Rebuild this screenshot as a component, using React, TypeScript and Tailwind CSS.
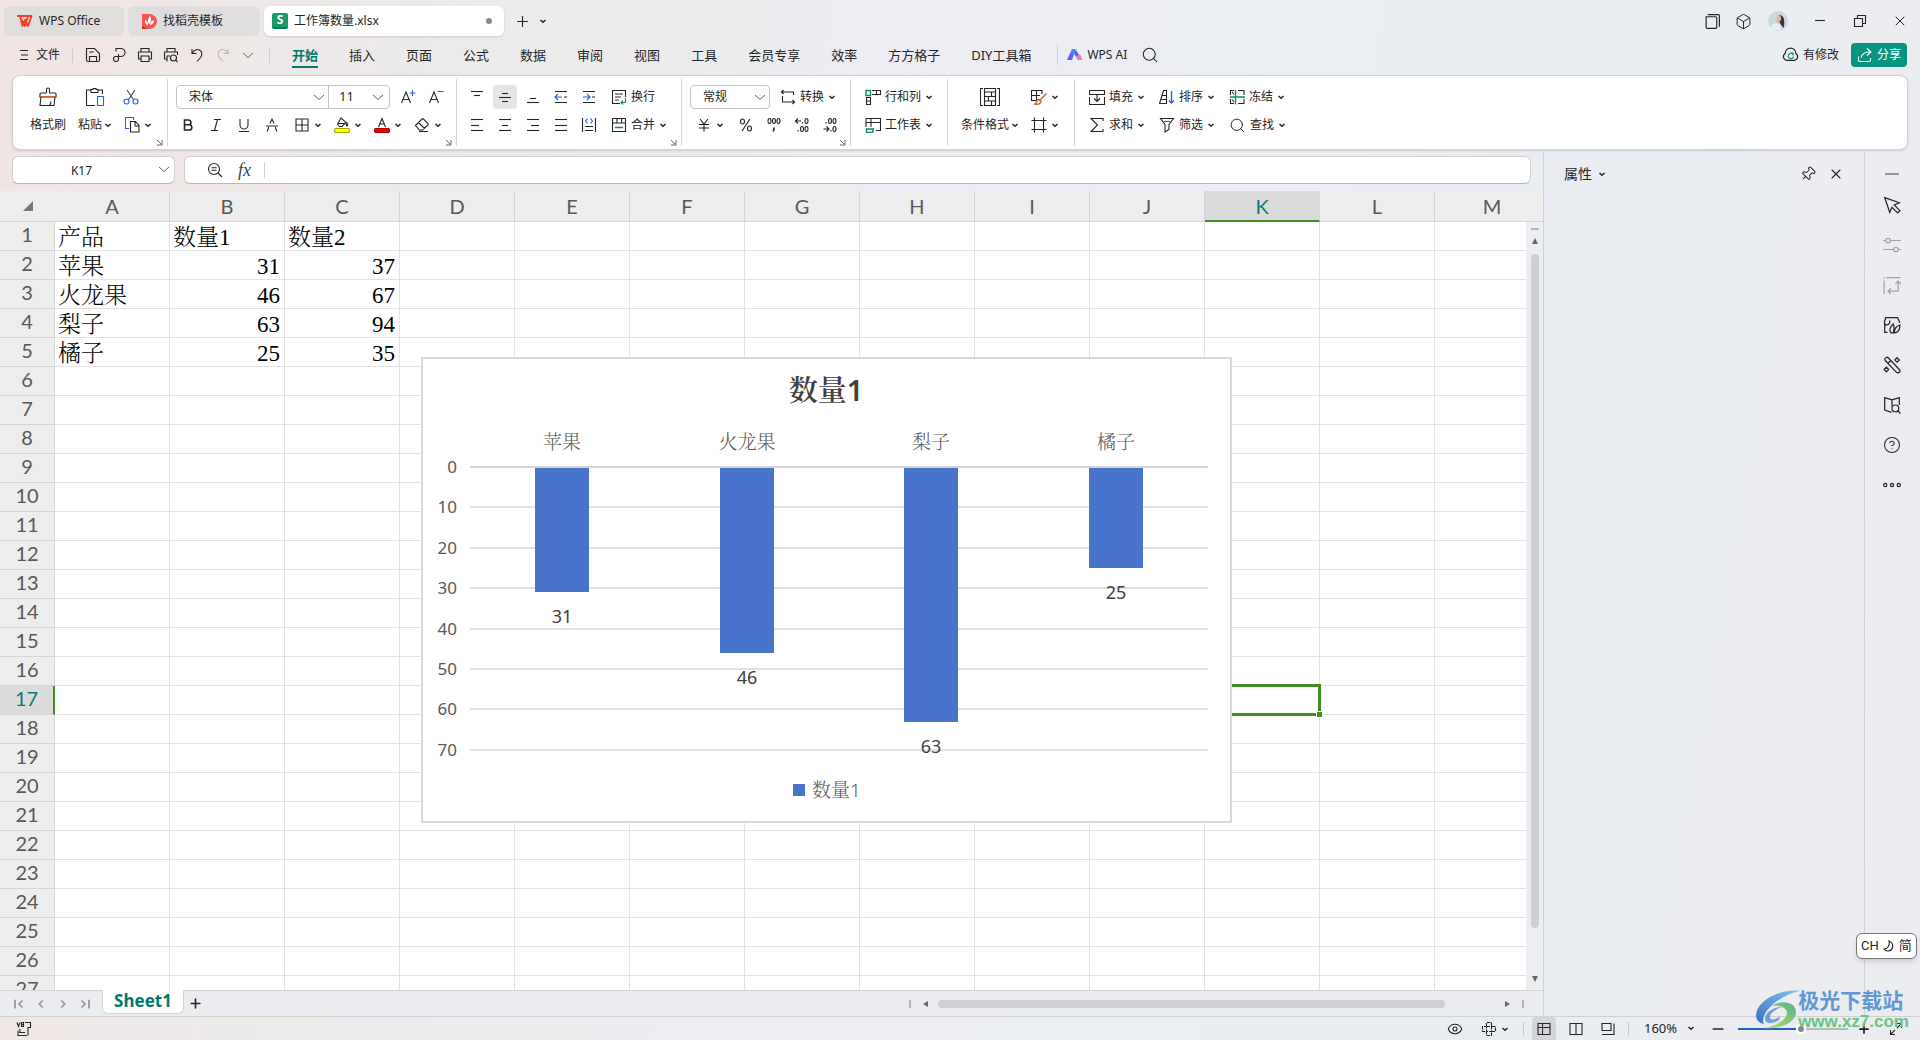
import type { ReactNode } from 'react';
import { Box, CircleHelp, Eye, Minus, Pin, Plus, Search, X } from 'lucide-react';

interface IconProps {
  size?: number;
  box?: number;
  className?: string;
  children: ReactNode;
}

function Icon({ size = 16, box = 16, className = '', children }: IconProps) {
  return (
    <svg
      width={size}
      height={size}
      viewBox={`0 0 ${box} ${box}`}
      fill="none"
      stroke="currentColor"
      strokeWidth={1.1}
      aria-hidden="true"
      className={`shrink-0 ${className}`}
    >
      {children}
    </svg>
  );
}

const BLUE = '#2b5fe0';
const GREEN = '#0f8a5f';
const ORANGE = '#d0672f';

function Chev() {
  return (
    <svg width="8" height="8" viewBox="0 0 8 8" fill="none" stroke="currentColor" strokeWidth="1.5" aria-hidden="true" className="shrink-0">
      <path d="M1.500 3L4 5.300 6.500 3" />
    </svg>
  );
}

function WideChev({ className = '' }: { className?: string }) {
  return (
    <svg width="10" height="10" viewBox="0 0 10 10" fill="none" stroke="currentColor" aria-hidden="true" className={`shrink-0 text-[#666] ${className}`}>
      <path d="M0 3l5 4.500 5-4.500" />
    </svg>
  );
}

interface ToolProps {
  label: string;
  icon: ReactNode;
  active?: boolean;
}

function Tool({ label, icon, active }: ToolProps) {
  return (
    <button aria-label={label} className="flex h-7 w-7 items-center justify-center">
      <span className={active ? 'flex size-6 items-center justify-center rounded bg-[#e5e5e5]' : 'flex size-6 items-center justify-center'}>
        {icon}
      </span>
    </button>
  );
}

function DropTool({ label, icon }: ToolProps) {
  return (
    <button aria-label={label} className="flex h-7 w-10 items-center gap-1 pl-1">
      {icon}
      <Chev />
    </button>
  );
}

function TextTool({ label, icon, drop = true }: ToolProps & { drop?: boolean }) {
  return (
    <button className="flex h-7 items-center gap-1 pl-1 whitespace-nowrap">
      {icon}
      <span>{label}</span>
      {drop && <Chev />}
    </button>
  );
}

function Group({ children, launcher, className = '' }: { children: ReactNode; launcher?: boolean; className?: string }) {
  return (
    <div className={`relative my-[3px] shrink-0 border-r border-[#d6d6d6] pt-1 ${className}`}>
      {children}
      {launcher && (
        <button aria-label="更多设置" className="absolute right-1 bottom-0 text-[#666]">
          <svg width="7" height="7" viewBox="0 0 7 7" fill="none" stroke="currentColor" aria-hidden="true">
            <path d="M1 1l4 4M6 1v5H1" />
          </svg>
        </button>
      )}
    </div>
  );
}

function Lines({ rows }: { rows: [number, number, number][] }) {
  return (
    <Icon>
      {rows.map(([x1, x2, y]) => (
        <path key={y} d={`M${x1} ${y}H${x2}`} />
      ))}
    </Icon>
  );
}

function TitleBar() {
  return (
    <header className="flex h-[38px] shrink-0 items-center pt-1 pl-1">
      <button className="flex h-[30px] w-[120px] items-center gap-1.5 rounded-md bg-[#e0dddd] pl-3">
        <svg width="17" height="14" viewBox="0 0 17 14" aria-hidden="true">
          <path d="M1 2h11l-3 10-3-6M4 2l2.500 10 3-7M9 7l3 5 3.500-10h-4" fill="none" stroke="#f5402c" strokeWidth="1.900" strokeLinejoin="round" />
        </svg>
        WPS Office
      </button>
      <button className="ml-1 flex h-[30px] w-[132px] items-center gap-1.5 rounded-md bg-[#dfdddd] pl-3.5">
        <svg width="15" height="17" viewBox="0 0 15 17" aria-hidden="true">
          <path d="M0 1h7a8 7.500 0 0 1 0 15H0z" fill="#f25555" />
          <path d="M0 13l5 3H0z" fill="#b82f2f" />
          <path d="M8 3c2 3 1 6-1 8-2-2-1-5 1-8zM3 7c2 1 3 2 3 5-2 0-3-2-3-5zM12 7c0 3-2 5-4 5 0-3 2-4 4-5z" fill="#fff" />
        </svg>
        找稻壳模板
      </button>
      <div className="ml-1 flex h-[30px] w-[240px] items-center gap-1.5 rounded-md bg-white pr-3 pl-2 shadow-sm">
        <span className="flex size-4 items-center justify-center rounded-xs border-b-2 border-[#0a7a4c] bg-[#159a68] text-xs leading-3 font-bold text-white">S</span>
        工作簿数量.xlsx
        <span className="ml-auto size-1.5 rounded-full bg-[#8a8a8a]" />
      </div>
      <button aria-label="新建" className="ml-2.5"><Plus size={17} strokeWidth={1.6} /></button>
      <button aria-label="标签列表" className="ml-2"><Chev /></button>
      <div className="ml-auto flex items-center">
        <button aria-label="窗口" className="mr-3.5">
          <Icon size={17}>
            <path d="M2 3.500h9a1 1 0 0 1 1 1v9a1 1 0 0 1-1 1H3a1 1 0 0 1-1-1zM3.500 1.500h10a1 1 0 0 1 1 1V13" />
          </Icon>
        </button>
        <button aria-label="应用" className="mr-4"><Box size={17} strokeWidth={1.4} /></button>
        <button aria-label="账号" className="mr-3">
          <svg width="20" height="20" viewBox="0 0 20 20" aria-hidden="true">
            <circle cx="10" cy="10" r="10" fill="#cbd9de" />
            <path d="M9 8c0-4 4-5 6-2 2 3 1 7 1 11l-3-3-2-4z" fill="#3d3238" />
            <path d="M9 6c1-2 3-2 4 0v3l-3 3-2-1z" fill="#dfb7aa" />
            <path d="M3 19c0-4 2-7 5-7l4 2 1 5z" fill="#e6eff1" />
          </svg>
        </button>
        <button aria-label="最小化" className="flex w-10 justify-center"><Icon size={12} box={12}><path d="M1 5.500h10" /></Icon></button>
        <button aria-label="还原" className="flex w-10 justify-center">
          <Icon size={14} box={14}><path d="M1.500 4.500h8v8h-8zM4.500 4.500v-3h8v8h-3" /></Icon>
        </button>
        <button aria-label="关闭" className="flex w-10 justify-center"><X size={16} strokeWidth={1.5} /></button>
      </div>
    </header>
  );
}

const menus = ['开始', '插入', '页面', '公式', '数据', '审阅', '视图', '工具', '会员专享', '效率', '方方格子', 'DIY工具箱'];

function MenuBar() {
  return (
    <nav className="flex h-[37px] shrink-0 items-center pr-[13px] pb-1 pl-[18px]">
      <button className="flex items-center gap-1.5">
        <Icon size={12} box={12}><path d="M2 1.500h8M3 6h7M2 10.500h8" /></Icon>
        文件
      </button>
      <span className="ml-3 h-4 w-px bg-[#cfcdcd]" />
      <div className="ml-3 flex items-center gap-2.5">
        <button aria-label="保存"><Icon><path d="M2 1.500h7.500l5 5V13a1.500 1.500 0 0 1-1.500 1.500H3A1.500 1.500 0 0 1 1.500 13V1.500zM4.500 14.500v-5h7v5M4.500 5h4" /></Icon></button>
        <button aria-label="输出"><Icon><path d="M5 4.500v-3h5a4 4 0 0 1 0 8H5a2.500 2.500 0 1 0 2.500 2.500V7" /></Icon></button>
        <button aria-label="打印"><Icon><path d="M4 5V1.500h8V5M4 12H1.500V5h13v7H12M4 9h8v5.500H4z" /></Icon></button>
        <button aria-label="打印预览"><Icon><path d="M4 5V1.500h8V5M4 12H1.500V5h13v3M4 14.500V9h3" /><circle cx="10.500" cy="11" r="3" /><path d="M12.700 13.200l2 2" /></Icon></button>
        <button aria-label="撤销"><Icon><path d="M3 2v4.500h4.500M3.500 6C5 3 8 1.700 10.500 3c3 1.500 3 5 1 7.500L8 14.500" /></Icon></button>
        <button aria-label="恢复" className="text-[#b9b5b5]"><Icon><path d="M13 2v4.500H8.500M12.500 6C11 3 8 1.700 5.500 3c-3 1.500-3 5-1 7.500L8 14.500" /></Icon></button>
        <button aria-label="更多" className="pl-0.5"><WideChev className="text-[#333]" /></button>
      </div>
      <span className="ml-4 h-4 w-px bg-[#cfcdcd]" />
      <div className="ml-[22px] flex gap-[31px] text-[13px] whitespace-nowrap">
        {menus.map((name, i) => (
          <button
            key={name}
            className={
              i === 0
                ? 'border-y-2 border-t-transparent border-b-[#007a6c] pt-1 pb-0.5 font-bold text-[#007a6c]'
                : 'border-y-2 border-transparent pt-1 pb-0.5'
            }
          >
            {name}
          </button>
        ))}
      </div>
      <span className="ml-[26px] h-5 w-px bg-[#cfcfd6]" />
      <button className="ml-2 flex items-center gap-1 whitespace-nowrap">
        <svg width="17" height="13" viewBox="0 0 17 13" aria-hidden="true">
          <defs>
            <linearGradient id="ai" x1="0" y1="1" x2="1" y2="0">
              <stop offset="0" stopColor="#7a3cf5" />
              <stop offset="1" stopColor="#2aa5ff" />
            </linearGradient>
          </defs>
          <path d="M1 12L6 1h4L6 12z" fill="url(#ai)" />
          <path d="M10 2l3 5-3 2-2-4z" fill="#4b62f7" />
          <path d="M10 9l4-3 2.500 6H12z" fill="#f777a8" />
        </svg>
        WPS AI
      </button>
      <button aria-label="搜索" className="ml-3.5"><Search size={18} strokeWidth={1.4} /></button>
      <button className="ml-auto flex items-center gap-1 whitespace-nowrap">
        <Icon size={17}>
          <path d="M4.500 13.500a3.500 3.500 0 0 1-1.500-6.500c0-3 2-5 5-5s5 2 5 5a3.500 3.500 0 0 1-1.500 6.500z" />
          <path d="M10.500 8a2.500 2.500 0 1 0 .3 2M8.500 6.500l2 .5V9" stroke={GREEN} />
        </Icon>
        有修改
      </button>
      <button className="ml-3 flex h-6 w-14 items-center justify-center gap-1 rounded bg-[#079480] whitespace-nowrap text-white">
        <Icon><path d="M10 1.500l4 3.500-4 3.500M14 5C8 4.500 5 7 4 10.500M1.500 9.500V13A1.500 1.500 0 0 0 3 14.500h9a1.500 1.500 0 0 0 1.500-1.500v-2" /></Icon>
        分享
      </button>
    </nav>
  );
}

function Ribbon() {
  return (
    <div className="mx-3 flex h-[75px] shrink-0 rounded-lg border border-[#d2d2d4] bg-white shadow-sm">
      <Group launcher className="flex w-[155px] pl-[17px]">
        <button className="flex flex-col items-center">
          <span className="flex h-7 items-center">
            <Icon size={20} box={20}>
              <path d="M8.500 6V2.500a1.500 1.500 0 0 1 3 0V6H17a1 1 0 0 1 1 1v3H2V7a1 1 0 0 1 1-1h5.500M3 10L2 18.500h14l1-8.500M12 18.500l1-4" />
              <path d="M2.500 9.500h15" stroke={ORANGE} />
            </Icon>
          </span>
          <span className="flex h-7 items-center">格式刷</span>
        </button>
        <button className="ml-3 flex flex-col items-center">
          <span className="flex h-7 items-center">
            <Icon size={20} box={20}>
              <path d="M6 3H1.500v15.500H10M13 3h4.500v4M6 2.500h2v-1h3v1h2v3H6z" />
              <path d="M12.500 9.500h6v9h-6z" stroke={BLUE} />
            </Icon>
          </span>
          <span className="flex h-7 items-center gap-0.5">粘贴<Chev /></span>
        </button>
        <div className="ml-2 flex flex-col">
          <button aria-label="剪切" className="flex h-7 items-center pl-[3px] text-[#444]">
            <Icon>
              <path d="M4 1l6.500 9.500M12 1L5.500 10.500" />
              <circle cx="3.500" cy="12.500" r="2.500" stroke={BLUE} />
              <circle cx="12.500" cy="12.500" r="2.500" stroke={BLUE} />
            </Icon>
          </button>
          <DropTool
            label="复制"
            icon={
              <Icon>
                <path d="M5 11.500H1.500v-11h8V3" stroke={BLUE} />
                <path d="M6.500 4.500h5l3.500 4v6.500H6.500zM11 4.500V9h4" />
              </Icon>
            }
          />
        </div>
      </Group>

      <Group launcher className="w-[289px] pl-1.5">
        <div className="flex h-7 items-center pl-0.5">
          <label className="relative flex h-6 w-[153px] items-center rounded-l border border-[#c4c4c4]">
            <select aria-label="字体" className="h-full w-full appearance-none pl-3 outline-none">
              <option>宋体</option>
            </select>
            <WideChev className="pointer-events-none absolute right-1" />
          </label>
          <label className="relative -ml-px flex h-6 w-[62px] items-center rounded-r border border-[#c4c4c4]">
            <select aria-label="字号" className="h-full w-full appearance-none pl-2.5 text-[13px] outline-none">
              <option>11</option>
            </select>
            <WideChev className="pointer-events-none absolute right-1.5" />
          </label>
          <span className="w-1" />
          <Tool label="增大字号" icon={<Icon><path d="M1.500 14L6 3l4.500 11M3 10.500h6" /><path d="M9.500 4h6M12.500 1v6" stroke={BLUE} /></Icon>} />
          <Tool label="减小字号" icon={<Icon><path d="M1.500 14L6 3l4.500 11M3 10.500h6" /><path d="M9.500 2.500h6" stroke={BLUE} /></Icon>} />
        </div>
        <div className="flex">
          <Tool label="加粗" icon={<Icon><path d="M4.500 3h4a2.300 2.300 0 0 1 0 4.800h-4zM4.500 7.800h4.700a2.600 2.600 0 0 1 0 5.200H4.500z" strokeWidth="1.600" /></Icon>} />
          <Tool label="倾斜" icon={<Icon><path d="M6 2.500h7M3 13.500h7M9.500 2.500l-3 11" /></Icon>} />
          <Tool label="下划线" icon={<Icon><path d="M4 2v6a4 4 0 0 0 8 0V2M3 14.500h10" /></Icon>} />
          <Tool label="删除线" icon={<Icon><path d="M2 9h12M6 6.500L8 2l2 4.500M4.800 10L3 14.500M11.200 10l1.800 4.500" /></Icon>} />
          <span className="w-1" />
          <DropTool label="边框" icon={<Icon><path d="M2 2h12v12H2zM8 2v12M2 8h12" /></Icon>} />
          <DropTool
            label="填充颜色"
            icon={
              <Icon>
                <path d="M7 1l5 4.500L8 9.500H5.500L3.500 7zM3.500 6.500h8M13 6c1 1.500 1 2.500 0 3-1-.5-1-1.500 0-3z" />
                <rect x=".5" y="11.500" width="15" height="4" rx="1.500" fill="#ff0" stroke="#a8a800" />
              </Icon>
            }
          />
          <DropTool
            label="字体颜色"
            icon={
              <Icon>
                <path d="M4.500 10L8 1.500l3.500 8.500M6 7h4" />
                <rect x=".5" y="11.500" width="15" height="4" rx="1.500" fill="#f00000" stroke="#b00000" />
              </Icon>
            }
          />
          <DropTool label="清除" icon={<Icon><path d="M1.500 8.500l6.500-6.500a1 1 0 0 1 1.400 0l4.600 4.600a1 1 0 0 1 0 1.400l-5.500 5H5.500zM4.500 5.500l6 6M5 14.500h9" /></Icon>} />
        </div>
      </Group>

      <Group launcher className="w-[225px] pl-1.5">
        <div className="flex">
          <Tool label="顶端对齐" icon={<Lines rows={[[2, 14, 2.5], [5, 11, 6.5]]} />} />
          <Tool label="垂直居中" active icon={<Lines rows={[[5, 11, 4.5], [2, 14, 8.5], [5, 11, 12.5]]} />} />
          <Tool label="底端对齐" icon={<Lines rows={[[5, 11, 9.5], [2, 14, 13.5]]} />} />
          <Tool label="减少缩进" icon={<Icon><path d="M2 2.500h12M2 13.500h12M11 8h3" /><path d="M9 8H2M5 5L2 8l3 3" stroke={BLUE} /></Icon>} />
          <Tool label="增加缩进" icon={<Icon><path d="M2 2.500h12M2 13.500h12M11 8h3" /><path d="M2 8h7M6 5l3 3-3 3" stroke={BLUE} /></Icon>} />
          <span className="w-1" />
          <TextTool label="换行" drop={false} icon={<Icon><path d="M9 14.500H1.500v-13h13V8M4 5h8M4 8h6M4 11h4" /><path d="M14.500 9v4.500H10M12 11.500l-2 2 2 2" stroke={GREEN} /></Icon>} />
        </div>
        <div className="flex">
          <Tool label="左对齐" icon={<Lines rows={[[2, 14, 2.5], [2, 10, 8.5], [2, 14, 13.5]]} />} />
          <Tool label="居中" icon={<Lines rows={[[2, 14, 2.5], [5, 11, 8.5], [2, 14, 13.5]]} />} />
          <Tool label="右对齐" icon={<Lines rows={[[2, 14, 2.5], [6, 14, 8.5], [2, 14, 13.5]]} />} />
          <Tool label="两端对齐" icon={<Lines rows={[[2, 14, 2.5], [2, 14, 8.5], [2, 14, 13.5]]} />} />
          <Tool label="分散对齐" icon={<Icon><path d="M1.500 1v14M14.500 1v14M4 9.500h8M4 13.500h8" /><path d="M6.500 1.500L4.500 4l2 2.500M9.500 1.500l2 2.500-2 2.500" stroke={BLUE} /></Icon>} />
          <span className="w-1" />
          <TextTool label="合并" icon={<Icon><path d="M1.500 1.500h13v13h-13zM1.500 6h13M6 1.500V6M10.500 1.500V6" /><path d="M4 10.500h8" stroke={GREEN} strokeWidth="1.500" /></Icon>} />
        </div>
      </Group>

      <Group launcher className="w-[169px] pl-2">
        <div className="flex h-7 items-center">
          <label className="relative flex h-6 w-20 items-center rounded border border-[#c4c4c4]">
            <select aria-label="数字格式" className="h-full w-full appearance-none pl-3 outline-none">
              <option>常规</option>
            </select>
            <WideChev className="pointer-events-none absolute right-1" />
          </label>
          <span className="w-1.5" />
          <TextTool label="转换" icon={<Icon><path d="M3.500 1L1.500 3l2 2M1.500 3H13.500v3M12.500 11l2 2-2 2M14.500 13H2.500V7" /></Icon>} />
        </div>
        <div className="flex pl-0.5">
          <DropTool label="货币" icon={<Icon><path d="M4 2l4 5 4-5M8 7v7.500M3 7.500h10M3 11h10" /></Icon>} />
          <Tool label="百分比" icon={<Icon><ellipse cx="4.500" cy="4.500" rx="2" ry="2.500" /><ellipse cx="11.500" cy="11.500" rx="2" ry="2.500" /><path d="M12 2L4 14" /></Icon>} />
          <Tool
            label="千位分隔"
            icon={<Icon><ellipse cx="3.500" cy="4" rx="1.500" ry="2.500" /><ellipse cx="8" cy="4" rx="1.500" ry="2.500" /><ellipse cx="12.500" cy="4" rx="1.500" ry="2.500" /><path d="M8 10.500v2l-1 2" strokeWidth="1.600" /></Icon>}
          />
          <Tool
            label="增加小数位"
            icon={<Icon><path d="M1.500 4H7M4 1.500L1.500 4 4 6.500M4 13v1.500M8.500 5v1.500" /><ellipse cx="12.500" cy="4" rx="1.500" ry="2.500" /><ellipse cx="8" cy="12" rx="1.500" ry="2.500" /><ellipse cx="12.500" cy="12" rx="1.500" ry="2.500" /></Icon>}
          />
          <Tool
            label="减少小数位"
            icon={<Icon><path d="M1.500 12H7M4.500 9.500L7 12l-2.500 2.500M4 5v1.500M9 13v1.500" /><ellipse cx="8" cy="4" rx="1.500" ry="2.500" /><ellipse cx="12.500" cy="4" rx="1.500" ry="2.500" /><ellipse cx="12.500" cy="12" rx="1.500" ry="2.500" /></Icon>}
          />
        </div>
      </Group>

      <Group className="w-[97px] pl-2.5">
        <TextTool label="行和列" icon={<Icon><path d="M1.500 8.500h4v7h-4zM1.500 12h4M7 1.500h8.500v4H7M11.500 1.500v4" /><path d="M1 1.500h4.500v5H1z" stroke={GREEN} strokeWidth="1.400" /></Icon>} />
        <TextTool label="工作表" icon={<Icon><path d="M1 10v-8.500h14.500v12H11M1 5.500h14.500M6 1.500V10" /><path d="M1.500 12h7l-1 3.500h-6z" stroke={GREEN} strokeWidth="1.400" /></Icon>} />
      </Group>

      <Group className="flex w-[127px] pl-[13px]">
        <button className="flex flex-col items-center whitespace-nowrap">
          <span className="flex h-7 items-center">
            <Icon size={20} box={20}>
              <path d="M3 1.500H.500v17H3M17 1.500h2.500v17H17M4.500 1v18M15.500 1v18M4.500 5h11M4.500 9.500h11M4.500 14h11M11.500 5v4.500M8.500 9.500V14M11.500 14v4.500M4.500 18.500h11M4.500 1.500h11" />
            </Icon>
          </span>
          <span className="flex h-7 items-center gap-0.5">条件格式<Chev /></span>
        </button>
        <div className="ml-2 flex flex-col">
          <DropTool label="表格样式" icon={<Icon><path d="M5 11.500H.500v-10h10.500V5M.500 6.500H9M5.500 1.500v10" /><path d="M15.500 4.500L9 11M7.500 10.500c-2 0-1.500 3-3.500 4.500 3.500.5 6 0 6-3z" stroke={ORANGE} strokeWidth="1.500" /></Icon>} />
          <DropTool label="单元格" icon={<Icon><path d="M3.500.500v15M12.500.500v15M.500 3.500h15M.500 12.500h15" /></Icon>} />
        </div>
      </Group>

      <div className="mt-[7px] grid shrink-0 grid-cols-[70px_70px_70px] content-start pl-2.5">
        <TextTool label="填充" icon={<Icon><path d="M.500 5.500v-4h15v4zM3.500 5.500M.500 8v7.500h15V8M8 5.500v7M5 9.500L8 12.500 11 9.500" /></Icon>} />
        <TextTool label="排序" icon={<Icon><path d="M.500 14.500L4.500 1.500H7.500v13zM3 6.500h4.500M2 10.500h5.500" /><path d="M12.500 2v12M10 11.500l2.500 2.500 2.500-2.500" stroke={BLUE} strokeWidth="1.400" /></Icon>} />
        <TextTool label="冻结" icon={<Icon><path d="M5 1.500H1.500V6M1.500 10v4.500H5M9 1.500h6V6M15 10v4.500H9M3 3l2 2.500M3 10.500l2 2.500" /><path d="M6.500 1v14.500M1 8h15" stroke={GREEN} strokeWidth="1.400" /></Icon>} />
        <TextTool label="求和" icon={<Icon><path d="M14 4V1.500H2L8.500 8 2 14.500h12V12" /></Icon>} />
        <TextTool label="筛选" icon={<Icon><path d="M1.500 1.500h13L10 7.500v5l-4 2.500V7.500z" /><path d="M5 4.500h6" stroke={GREEN} /></Icon>} />
        <TextTool label="查找" icon={<Search size={17} strokeWidth={1.4} />} />
      </div>
    </div>
  );
}

function FormulaBar() {
  return (
    <div className="flex h-[41px] shrink-0 items-start gap-[9px] pt-1.5 pr-3 pl-3">
      <div className="relative w-[163px]">
        <input
          aria-label="名称框"
          defaultValue="K17"
          className="h-7 w-full rounded-md border border-[#d0cece] border-b-[#b9b7b7] bg-white pr-6 text-center outline-none"
        />
        <WideChev className="pointer-events-none absolute top-2 right-1.5" />
      </div>
      <div className="flex h-7 flex-1 items-center rounded-md border border-[#d0cece] border-b-[#b9b7b7] bg-white pl-[22px]">
        <Icon><circle cx="7" cy="7" r="5.500" /><path d="M11 11l4 4M4.500 5.700h5M4.500 8.300h5" /></Icon>
        <span className="ml-[15px] w-4 font-['Liberation_Serif',serif] text-lg leading-5 text-[#444] italic">fx</span>
        <span className="ml-2.5 h-4 w-px bg-[#d0d0d0]" />
        <input aria-label="编辑栏" className="h-full flex-1 px-2 outline-none" />
      </div>
    </div>
  );
}

const columns = 'ABCDEFGHIJKLM'.split('');
const sheet: (string | number)[][] = [
  ['产品', '数量1', '数量2'],
  ['苹果', 31, 37],
  ['火龙果', 46, 67],
  ['梨子', 63, 94],
  ['橘子', 25, 35],
];
const rowNumbers = Array.from({ length: 27 }, (_, i) => i + 1);

function SheetTable() {
  return (
    <table className="w-[1550px] table-fixed border-separate border-spacing-0">
      <thead>
        <tr className="h-[31px] font-['Lato',sans-serif] text-xl leading-6 text-[#595959]">
          <th className="w-[55px] border-r border-b border-r-[#ededed] border-b-[#d5d5d5] bg-[#ededed]">
            <svg width="10" height="10" viewBox="0 0 10 10" className="ml-[23px]" aria-label="全选">
              <path d="M10 0v10H0z" fill="#777" />
            </svg>
          </th>
          {columns.map((c) => (
            <th
              key={c}
              scope="col"
              className={
                c === 'K'
                  ? 'w-[115px] border-r border-b-2 border-r-[#dbdbdb] border-b-[#3f8f20] bg-[#dbdbdb] p-0 font-normal text-[#0a7d70]'
                  : 'w-[115px] border-r border-b border-[#d5d5d5] bg-[#ededed] p-0 font-normal'
              }
            >
              {c}
            </th>
          ))}
        </tr>
      </thead>
      <tbody>
        {rowNumbers.map((n) => (
          <tr key={n} className="h-[29px]">
            <th
              scope="row"
              className={
                n === 17
                  ? "border-r-2 border-b border-r-[#3f8f20] border-b-[#d5d5d5] bg-[#dbdbdb] p-0 align-top font-['Lato',sans-serif] text-xl leading-6 font-normal text-[#0a7d70]"
                  : "border-r border-b border-[#d5d5d5] bg-[#ededed] p-0 align-top font-['Lato',sans-serif] text-xl leading-6 font-normal text-[#595959]"
              }
            >
              {n}
            </th>
            {columns.map((c, i) => {
              const value = sheet[n - 1]?.[i];
              return (
                <td
                  key={c}
                  className={
                    typeof value === 'number'
                      ? "border-r border-b border-[#e2e2e2] bg-white py-0 pr-1 pl-1 text-right align-bottom font-['Liberation_Serif',serif] text-[23px] leading-6 text-black"
                      : "relative border-r border-b border-[#e2e2e2] bg-white py-0 pr-1 pl-[3px] text-left align-bottom font-['Liberation_Serif','Noto_Serif_CJK_SC','Noto_Sans_CJK_SC',serif] text-[23px] leading-6 font-light text-black"
                  }
                >
                  {value}
                  {n === 17 && c === 'K' && (
                    <span className="absolute -inset-0.5 z-10 border-3 border-[#3f8f20]">
                      <span className="absolute -right-1 -bottom-1 size-1.5 border-t border-l border-white bg-[#3f8f20]" />
                    </span>
                  )}
                </td>
              );
            })}
          </tr>
        ))}
      </tbody>
    </table>
  );
}

const chart = { width: 807, height: 462, left: 47, right: 785, top: 108, step: 4.04, barWidth: 54 };

function Chart() {
  const data = sheet.slice(1).map(([name, value]) => ({ name: String(name), value: Number(value) }));
  const slot = (chart.right - chart.left) / data.length;
  const y = (v: number) => Math.round(chart.top + v * chart.step);

  return (
    <figure className="absolute top-[166px] left-[421px] z-20 border-2 border-[#d9d9d9] bg-white">
      <svg
        width={chart.width}
        height={chart.height}
        viewBox={`0 0 ${chart.width} ${chart.height}`}
        role="img"
        aria-label="数量1"
        className="block font-['Noto_Sans','Noto_Serif_CJK_SC',sans-serif] text-[17px]"
      >
        <text x={403} y={42} textAnchor="middle" fontSize={29} fontWeight={600} fill="#404040">数量1</text>
        {[0, 10, 20, 30, 40, 50, 60, 70].map((v) => (
          <g key={v}>
            <rect x={chart.left} y={y(v) - 1} width={chart.right - chart.left} height={2} fill={v === 0 ? '#d6d6d6' : '#e2e2e2'} />
            <text x={34} y={y(v) + 6} textAnchor="end" fill="#595959">{v}</text>
          </g>
        ))}
        {data.map(({ name, value }, i) => {
          const cx = Math.round(chart.left + slot * (i + 0.5));
          return (
            <g key={name} textAnchor="middle">
              <rect x={cx - chart.barWidth / 2} y={chart.top + 1} width={chart.barWidth} height={y(value) - chart.top - 1} fill="#4874cb" />
              <text x={cx} y={90} fontSize={19} fontWeight={300} fill="#595959">{name}</text>
              <text x={cx} y={y(value) + 31} fontSize={18} fill="#404040">{value}</text>
            </g>
          );
        })}
        <rect x={370} y={425} width={12} height={12} fill="#4874cb" />
        <text x={389} y={438} fontSize={19} fontWeight={300} fill="#595959">数量1</text>
      </svg>
    </figure>
  );
}

function SheetTabs() {
  return (
    <div className="flex h-[26px] shrink-0 items-center border-t border-[#d5d5d8] bg-[#ebecef]">
      <div className="flex gap-2 pl-3 text-[#999]">
        {['M3.500 3v10M12 4L8 8l4 4', 'M10 4L6 8l4 4', 'M6 4l4 4-4 4', 'M4 4l4 4-4 4M12.500 3v10'].map((d) => (
          <button key={d} aria-label="切换工作表">
            <Icon size={14}><path d={d} strokeWidth="2" /></Icon>
          </button>
        ))}
      </div>
      <button className="-mt-1 ml-2.5 flex h-6 w-[82px] items-center justify-center rounded-b-md border border-t-0 border-[#d5d5d8] bg-white font-['Noto_Sans',sans-serif] text-[17px] font-bold text-[#007a6c]">
        Sheet1
      </button>
      <button aria-label="新建工作表" className="ml-1"><Plus size={15} strokeWidth={2.6} /></button>
      <div className="ml-auto flex w-[634px] items-center pr-[19px]">
        <span className="h-2 w-0.5 bg-[#b5b5b9]" />
        <svg width="6" height="6" viewBox="0 0 6 6" className="ml-3" aria-hidden="true"><path d="M5 0v6L0 3z" fill="#666" /></svg>
        <div className="mx-[9px] h-2 flex-1 pr-[50px]">
          <div className="h-2 rounded-full bg-[#cfd0d3]" />
        </div>
        <svg width="6" height="6" viewBox="0 0 6 6" aria-hidden="true"><path d="M1 0v6l5-3z" fill="#666" /></svg>
        <span className="ml-3 h-2 w-0.5 bg-[#b5b5b9]" />
      </div>
    </div>
  );
}

function VerticalScroll() {
  return (
    <div className="flex w-[17px] shrink-0 flex-col items-center bg-[#ebedf1]">
      <div className="h-[31px] w-full shrink-0 border-b border-[#d5d5d5] bg-[#ededed]" />
      <span className="mt-1.5 h-0.5 w-2 shrink-0 bg-[#b5b5b9]" />
      <svg width="6" height="6" viewBox="0 0 6 6" className="mt-2 shrink-0" aria-hidden="true"><path d="M0 6h6L3 0z" fill="#666" /></svg>
      <span className="mt-2.5 w-2 flex-1 rounded-full bg-[#cfd0d3]" />
      <svg width="6" height="6" viewBox="0 0 6 6" className="mt-12 mb-2 shrink-0" aria-hidden="true"><path d="M0 0h6L3 6z" fill="#666" /></svg>
    </div>
  );
}

function SidePanel() {
  return (
    <aside className="w-[321px] shrink-0 border-l border-[#cfd1d4]">
      <div className="mt-3 flex h-6 items-center pr-5 pl-5 text-sm">
        <button className="flex items-center gap-1.5">属性<Chev /></button>
        <button aria-label="固定" className="ml-auto"><Pin size={16} strokeWidth={1.5} className="rotate-45" /></button>
        <button aria-label="关闭" className="ml-3"><X size={16} strokeWidth={1.6} /></button>
      </div>
    </aside>
  );
}

function ToolRail() {
  return (
    <div className="flex w-14 shrink-0 flex-col items-center border-l border-[#cfd1d4] pr-px">
      <span className="mt-[23px] h-0.5 w-3.5 shrink-0 bg-[#999492]" />
      <div className="mt-[21px] flex flex-col gap-[22px]">
        <button aria-label="选择">
          <Icon size={18}><path d="M1.500 1.500l13 4.500-4.500 2 5 5-2 2-5-5-2 4.500z" /></Icon>
        </button>
        <button aria-label="设置" className="text-[#a0a2a5]">
          <Icon size={18}><path d="M0 4h2.500M6.500 4H16M0 12h9.500M13.500 12H16" /><circle cx="4.500" cy="4" r="2" /><circle cx="11.500" cy="12" r="2" /></Icon>
        </button>
        <button aria-label="转置" className="text-[#a0a2a5]">
          <Icon size={18}><path d="M3 1.500h12.500M1 4v12M1 1v1.500M13.500 4.500v9H4.500M11 7l2.500-2.500L16 7M7 11l-2.500 2.500L7 16" /></Icon>
        </button>
        <button aria-label="美化">
          <Icon size={18}><path d="M4 14.500H1.500V7M1 6l1.500-4.500h10.500L15 6M1 6c1 2.500 4 2.500 5 0V4M7 15c-2-3 0-6 2-8 1 2 1 5 0 8zM10 15c0-4 2-6 5-7 0 4-1 7-5 7z" /></Icon>
        </button>
        <button aria-label="工具">
          <Icon size={18}><path d="M2 4a1.400 1.400 0 0 1 3-2L14.500 12a1.500 1.500 0 0 1-2.500 2.500zM4.500 6.500l2-2M12.500 1.500L14.500 3.500l-2 2-2-2zM3 10l2 2-2 2-2-2z" /></Icon>
        </button>
        <button aria-label="查阅">
          <Icon size={18}><path d="M8 3.500L1.500 1.500v11l6 2M8 3.500l6.500-2V8M8 3.500V9" /><circle cx="11" cy="11" r="3" /><path d="M13 13l2.500 2.500" /></Icon>
        </button>
        <button aria-label="帮助"><CircleHelp size={18} strokeWidth={1.4} /></button>
        <button aria-label="更多">
          <Icon size={18}><circle cx="2" cy="8" r="1.400" /><circle cx="8" cy="8" r="1.400" /><circle cx="14" cy="8" r="1.400" /></Icon>
        </button>
      </div>
    </div>
  );
}

function StatusBar() {
  return (
    <footer className="flex h-6 shrink-0 items-center border-t border-[#cfd1d4] pr-2 pl-4 text-[13px]">
      <button aria-label="宏">
        <Icon><path d="M1 1.500l1.500 4L4 1.500M5.500 1.500v4h2v-4zM5.500 3.500h2M9 1.500h5.500v5H12V14.500M2 9.500v5h9M3 11.500h6M4 11V8" /></Icon>
      </button>
      <button aria-label="护眼" className="ml-auto mr-[18px]"><Eye size={16} strokeWidth={1.6} /></button>
      <button aria-label="阅读" className="flex items-center gap-1">
        <Icon><path d="M5.500 5.500v-4h5v4h4v5h-4v4h-5v-4h-4v-5zM5.500 5.500h5v5h-5z" strokeDasharray="3.500 1" /></Icon>
        <Chev />
      </button>
      <span className="mr-2 ml-[14px] h-3.5 w-px bg-[#c8c9cc]" />
      <div className="flex gap-2">
        <button aria-label="普通视图" className="flex size-6 items-center justify-center rounded bg-[#d3d5d9]">
          <Icon size={14} box={14}><path d="M1 1.500h12v11H1zM1 5.500h12M5.500 1.500v11" /></Icon>
        </button>
        <button aria-label="分页预览" className="flex size-6 items-center justify-center">
          <Icon size={14} box={14}><path d="M1 1.500h12v11H1zM7 1.500v11" /></Icon>
        </button>
        <button aria-label="页面布局" className="flex size-6 items-center justify-center">
          <Icon size={14} box={14}><path d="M1 1.500h9v7H1zM13 1.500v11H1" /></Icon>
        </button>
      </div>
      <span className="mr-[15px] ml-2 h-3.5 w-px bg-[#c8c9cc]" />
      <button className="flex w-[58px] items-center gap-2.5">160%<Chev /></button>
      <button aria-label="缩小" className="mr-1 flex w-8 justify-center"><Minus size={16} strokeWidth={2.6} /></button>
      <input
        type="range"
        aria-label="缩放"
        defaultValue={58}
        className="h-4 w-[110px] appearance-none bg-[linear-gradient(90deg,#1f62cc_57%,#b3b6ba_57%)] bg-size-[100%_2px] bg-center bg-no-repeat [&::-webkit-slider-thumb]:size-2.5 [&::-webkit-slider-thumb]:appearance-none [&::-webkit-slider-thumb]:rounded-full [&::-webkit-slider-thumb]:border-2 [&::-webkit-slider-thumb]:border-white [&::-webkit-slider-thumb]:bg-[#888]"
      />
      <button aria-label="放大" className="flex w-8 justify-center"><Plus size={14} strokeWidth={3} /></button>
      <button aria-label="全屏" className="flex w-8 justify-center">
        <Icon size={14} box={14}><path d="M8 1.500h4.500V6M12.500 1.500L8 6M1.500 8v4.500H6M1.500 12.500L6 8" /></Icon>
      </button>
    </footer>
  );
}

function ImeBadge() {
  return (
    <div className="absolute right-[3px] bottom-[81px] flex h-[26px] w-[61px] items-center justify-center gap-1 rounded-md border border-[#777] bg-white font-['Roboto','Noto_Sans_CJK_SC',sans-serif] text-[13px] shadow-md">
      CH
      <Icon size={12} box={12}><path d="M6 1c5 2 5 9-.5 10-2 .3-3.500-.5-4.500-2C5 9 7 5 6 1z" /></Icon>
      简
    </div>
  );
}

function Watermark() {
  return (
    <div className="pointer-events-none absolute right-[11px] bottom-2 flex items-end">
      <svg width="48" height="44" viewBox="0 0 48 44" className="-mr-1" aria-hidden="true">
        <defs>
          <linearGradient id="swoosh" x1="0" y1="1" x2="1" y2="0">
            <stop offset="0" stopColor="#3f6fc0" />
            <stop offset="1" stopColor="#7cc8f2" />
          </linearGradient>
          <linearGradient id="leaf" x1="0" y1="1" x2="1" y2="0">
            <stop offset="0" stopColor="#c6dc6a" />
            <stop offset="1" stopColor="#4fb58a" />
          </linearGradient>
        </defs>
        <path d="M46 3C30 0 3 11 2 27c0 5 3 8 8 9C5 27 22 8 46 3z" fill="url(#swoosh)" />
        <path d="M18 18c10-7 24-4 24 6 0 11-17 18-34 16 12-1 25-8 25-15 0-6-8-8-15-7z" fill="url(#leaf)" />
        <path d="M28 19c-9 0-17 6-17 12 0 5 8 5 14 1l1-4c-4 4-10 5-10 1 0-4 6-8 12-10z" fill="#6d9fd8" />
      </svg>
      <div className="font-bold">
        <p className="text-[21px] leading-6 text-[#5f98d2]">极光下载站</p>
        <p className="font-['Liberation_Sans',sans-serif] text-[17px] leading-5 text-[#6cc285]">www.xz7.com</p>
      </div>
    </div>
  );
}

export default function App() {
  return (
    <div className="relative flex h-screen flex-col overflow-hidden bg-[linear-gradient(100deg,#f0e4e3_0%,#ecebea_22%,#ecedf3_45%,#e9edf1_75%,#ebecf0_100%)] font-['Noto_Sans','Noto_Sans_CJK_SC',sans-serif] text-xs text-[#262626]">
      <TitleBar />
      <MenuBar />
      <Ribbon />
      <div className="flex min-h-0 flex-1">
        <main className="flex min-w-0 flex-1 flex-col">
          <FormulaBar />
          <div className="flex min-h-0 flex-1">
            <div className="relative min-w-0 flex-1 overflow-hidden">
              <SheetTable />
              <Chart />
            </div>
            <VerticalScroll />
          </div>
          <SheetTabs />
        </main>
        <SidePanel />
        <ToolRail />
      </div>
      <StatusBar />
      <ImeBadge />
      <Watermark />
    </div>
  );
}
